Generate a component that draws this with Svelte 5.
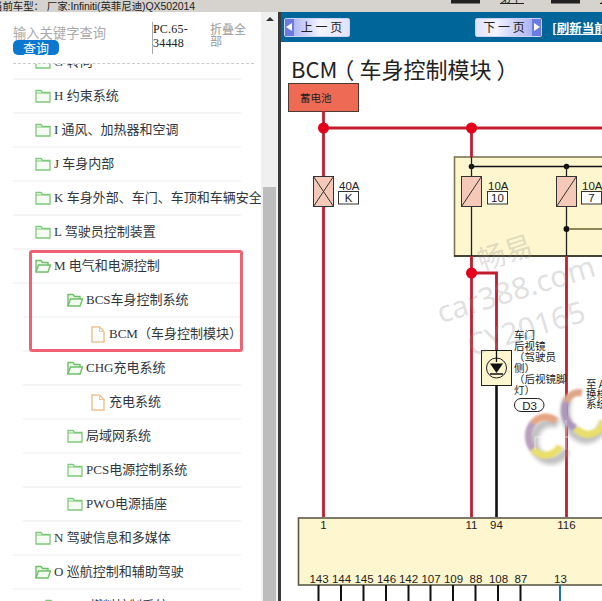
<script>
	const rows = [
		{ label: 'G 转向', level: 1, icon: 'closed' },
		{ label: 'H 约束系统', level: 1, icon: 'closed' },
		{ label: 'I 通风、加热器和空调', level: 1, icon: 'closed' },
		{ label: 'J 车身内部', level: 1, icon: 'closed' },
		{ label: 'K 车身外部、车门、车顶和车辆安全系统', level: 1, icon: 'closed' },
		{ label: 'L 驾驶员控制装置', level: 1, icon: 'closed' },
		{ label: 'M 电气和电源控制', level: 1, icon: 'open' },
		{ label: 'BCS车身控制系统', level: 2, icon: 'open' },
		{ label: 'BCM（车身控制模块）', level: 3, icon: 'doc' },
		{ label: 'CHG充电系统', level: 2, icon: 'open' },
		{ label: '充电系统', level: 3, icon: 'doc' },
		{ label: '局域网系统', level: 2, icon: 'closed' },
		{ label: 'PCS电源控制系统', level: 2, icon: 'closed' },
		{ label: 'PWO电源插座', level: 2, icon: 'closed' },
		{ label: 'N 驾驶信息和多媒体', level: 1, icon: 'closed' },
		{ label: 'O 巡航控制和辅助驾驶', level: 1, icon: 'open' },
		{ label: '燃料控制系统', level: 4, icon: 'closed' }
	];

	const topPins = [
		{ n: '1', x: 323.5 },
		{ n: '11', x: 471.5 },
		{ n: '94', x: 496.5 },
		{ n: '116', x: 566.5 }
	];

	const bottomPins = [
		{ n: '143', x: 319, w: 318.5 },
		{ n: '144', x: 341.5, w: 341 },
		{ n: '145', x: 364, w: 363.5 },
		{ n: '146', x: 386.5, w: 386 },
		{ n: '142', x: 408.5, w: 408.5 },
		{ n: '107', x: 431, w: 430.5 },
		{ n: '109', x: 453.5, w: 453 },
		{ n: '88', x: 476, w: 475.5 },
		{ n: '108', x: 498.5, w: 498 },
		{ n: '87', x: 521, w: 520.5 }
	];

	const mirrorLines = ['车门', '后视镜', '（驾驶员', '侧）', '（后视镜脚', '灯）'];
</script>

<div class="page">
	<div class="topbar">
		<span class="car">当前车型： 厂家:Infiniti(英菲尼迪)QX502014</span>
		<span class="tab-btn"></span>
		<span class="tab-link">第十</span>
		<span class="tab-btn"></span>
		<span class="tab-link last">第十</span>
	</div>

	<div class="main">
		<aside class="side">
			<div class="search">
				<div class="query">
					<div class="placeholder">输入关键字查询</div>
					<div class="query-btn">查询</div>
				</div>
				<div class="code">PC.65-<br />34448</div>
				<div class="fold">折叠全部</div>
			</div>

			<div class="tree">
				{#each rows as row}
					<div class="row lv{row.level}">
						{#if row.icon === 'closed'}
							<svg class="icon" width="16" height="14" viewBox="0 0 16 14">
								<path d="M1 13V1.5h5l1.5 2H15V13z" fill="#f6fcf4" stroke="#7fc97a" stroke-width="1.3" />
								<path d="M1 4h14" stroke="#7fc97a" stroke-width="1" />
							</svg>
						{:else if row.icon === 'open'}
							<svg class="icon" width="16" height="14" viewBox="0 0 16 14">
								<path d="M1 13V1.5h5l1.5 2H13V6" fill="#eaf7e6" stroke="#6fc069" stroke-width="1.4" />
								<path d="M1 13l2.5-7H15.5L13 13z" fill="#f6fcf4" stroke="#6fc069" stroke-width="1.4" />
							</svg>
						{:else}
							<svg class="icon doc" width="14" height="17" viewBox="0 0 14 17">
								<path d="M1 1h7.5L13 5.5V16H1z" fill="#fff" stroke="#efc594" stroke-width="1.5" />
								<path d="M8.5 1v4.5H13" fill="none" stroke="#efc594" stroke-width="1" />
							</svg>
						{/if}
						<span class="label">{row.label}</span>
					</div>
				{/each}
			</div>

			<div class="highlight"></div>
		</aside>

		<div class="scrollbar">
			<div class="arrow"></div>
			<div class="thumb"></div>
		</div>

		<section class="content">
			<div class="nav">
				<div class="page-btn">
					<span class="btn-arrow left"></span>
					<span class="btn-text">上 一 页</span>
				</div>
				<div class="page-btn next">
					<span class="btn-text">下 一 页</span>
					<span class="btn-arrow right"></span>
				</div>
				<span class="refresh">[刷新当前页]</span>
			</div>

			<svg class="diagram" viewBox="281 42 321 559" width="321" height="559">
				<defs>
					<filter id="soft"><feGaussianBlur stdDeviation="2" /></filter>
					<filter id="softer"><feGaussianBlur stdDeviation="1" /></filter>
				</defs>

				<!-- parens nudged to the middle of their cell -->
				<text x="291" y="78" class="title">BCM<tspan dx="-5">（</tspan><tspan dx="5">车身控制模块</tspan><tspan dx="5">）</tspan></text>

				<rect x="288.5" y="83.5" width="70" height="28" fill="#ee6a55" stroke="#4d3a32" />
				<text x="300" y="102" class="small" fill="#4a1410">蓄电池</text>

				<!-- yellow fuse block -->
				<rect x="454.5" y="157" width="160" height="99" fill="#fdf6cf" stroke="#7d7654" stroke-width="1.6" />
				<path d="M454 256H602" stroke="#2c2a20" stroke-width="1.5" />
				<path d="M471.5 166.5H602" stroke="#111" stroke-width="1.3" />
				<circle cx="471.5" cy="166.5" r="2.8" fill="#111" />
				<circle cx="566.5" cy="166.5" r="2.8" fill="#111" />
				<path d="M471.5 157V176M566.5 166V176M471.5 207V256M566.5 207V256" stroke="#222" stroke-width="1.3" />
				<circle cx="566.5" cy="229" r="3" fill="#111" />
				<path d="M569 229H602" stroke="#8c8558" stroke-width="2" />

				<!-- red supply lines -->
				<g fill="none" stroke="#c11f30" stroke-width="2.8">
					<path d="M323.5 111V176M323.5 207V517" />
					<path d="M323 128H602" />
					<path d="M471.5 128V157M471.5 256V517" />
					<path d="M471.5 273H496.5V350" />
					<path d="M566.5 256V517" />
				</g>
				<circle cx="323.5" cy="128" r="5.5" fill="#e2001a" />
				<circle cx="471.5" cy="128" r="5.5" fill="#e2001a" />
				<circle cx="471.5" cy="273" r="5.5" fill="#e2001a" />

				<!-- fuses -->
				<g stroke="#333" stroke-width="1" fill="#f5c9b8">
					<rect x="313.5" y="176.5" width="20" height="30" />
					<path d="M313.5 176.5L333.5 206.5M333.5 176.5L313.5 206.5" fill="none" />
					<rect x="461.5" y="176.5" width="20" height="30" />
					<path d="M461.5 206.5L481.5 176.5" fill="none" />
					<rect x="556.5" y="176.5" width="20" height="30" />
					<path d="M556.5 206.5L576.5 176.5" fill="none" />
				</g>
				<g class="fuse-label">
					<text x="339" y="190">40A</text>
					<text x="488" y="190">10A</text>
					<text x="582" y="190">10A</text>
				</g>
				<g fill="#fff" stroke="#333">
					<rect x="338.5" y="191.5" width="20" height="12.5" />
					<rect x="487.5" y="191.5" width="20" height="12.5" />
					<rect x="581.5" y="191.5" width="20" height="12.5" />
				</g>
				<g class="fuse-label" text-anchor="middle">
					<text x="348.5" y="202">K</text>
					<text x="497.5" y="202">10</text>
					<text x="591.5" y="202">7</text>
				</g>

				<!-- door mirror lamp -->
				<rect x="481.5" y="350.5" width="30" height="35" fill="#fdf6cf" stroke="#222" />
				<circle cx="496.5" cy="368" r="10" fill="none" stroke="#222" stroke-width="1" />
				<path d="M490 363.5H503L496.5 373z" fill="#111" />
				<path d="M490 374H503M496.5 350V362" stroke="#111" stroke-width="1.3" />
				<path d="M496.5 385V517" stroke="#111" stroke-width="2.6" />

				<!-- watermark -->
				<g class="mark" text-anchor="middle">
					<text x="505" y="263" font-size="28" transform="rotate(-18 505 253)">畅易</text>
					<text x="516" y="300" font-size="30" transform="rotate(-17 516 290)">car388.com</text>
					<text x="526" y="339" font-size="30" transform="rotate(-17 526 328)">CY20165</text>
				</g>

				{#each mirrorLines as line, i}
					<text x="514" y={339 + i * 11} class="small">{line}</text>
				{/each}
				<rect x="514.5" y="398.5" width="29.5" height="13" rx="6.5" fill="#fff" stroke="#222" />
				<text x="529.5" y="409.5" class="pin">D3</text>
				<text x="586" y="388" class="small">至 A</text>
				<text x="586" y="398" class="small">换档</text>
				<text x="586" y="408" class="small">系统</text>

				<!-- connector -->
				<rect x="298.5" y="518" width="320" height="67" fill="#fdf6cf" stroke="#5b5a47" stroke-width="1.6" />
				{#each topPins as pin}
					<text x={pin.x} y="528.5" class="pin">{pin.n}</text>
				{/each}
				{#each bottomPins as pin}
					<text x={pin.x} y="583" class="pin">{pin.n}</text>
					<path d="M{pin.w} 585V601" stroke="#111" stroke-width="2" />
				{/each}
				<text x="560.5" y="583" class="pin">13</text>
				<path d="M560 585V601" stroke="#1b75ae" stroke-width="2" />

				<!-- logo rings -->
				<g filter="url(#soft)" fill="none" stroke="#8f8f8f" stroke-width="9" opacity="0.55">
					<path d="M558 424A17 19 0 1 0 566 450" />
					<path d="M568 398A13 18 0 1 0 604 424" />
				</g>
				<g filter="url(#softer)" fill="none" stroke-width="7">
					<path d="M556 421A17 19 0 0 0 533 423" stroke="#e6a582" />
					<path d="M533 423A17 19 0 0 0 533 449" stroke="#b9a0bc" />
					<path d="M533 449A17 19 0 0 0 560 446" stroke="#e9df6c" />
					<path d="M582 393A14 15 0 0 0 566 402" stroke="#dea78a" />
					<path d="M566 402A14 18 0 0 0 576 428" stroke="#ad98bb" />
					<path d="M576 428A14 12 0 0 0 602 420" stroke="#e9df6c" />
				</g>
				<path d="M535 437H570M535 437V450M566 420V450" stroke="#fff" stroke-opacity="0.6" stroke-width="1" fill="none" />
			</svg>
		</section>
	</div>
</div>

<style>
	:global(body) {
		margin: 0;
		background: #fff;
	}

	.page {
		width: 602px;
		height: 601px;
		overflow: hidden;
		display: flex;
		flex-direction: column;
	}

	.topbar {
		flex: none;
		height: 12px;
		background: #d6d3ce;
		display: flex;
		align-items: flex-start;
		overflow: hidden;
	}

	.car {
		width: 459px;
		margin-left: -8px;
		margin-top: 1px;
		font: 10.5px/11px 'Liberation Sans', 'Noto Sans CJK SC', sans-serif;
		letter-spacing: -0.1px;
		color: #222;
		white-space: nowrap;
		flex: none;
	}

	.tab-btn {
		flex: none;
		width: 29px;
		height: 4px;
		background: #222;
		border-bottom: 1px solid #777;
		box-sizing: border-box;
	}

	.tab-link {
		flex: none;
		width: 24px;
		margin: -8px 27px 0 20px;
		font: 11px/11px 'Noto Sans CJK SC', sans-serif;
		height: 11px;
		color: #222;
		border-bottom: 1px solid #222;
		white-space: nowrap;
	}

	.main {
		flex: 1;
		display: flex;
		min-height: 0;
	}

	.side {
		flex: none;
		width: 261px;
		position: relative;
		overflow: hidden;
		display: flex;
		flex-direction: column;
		background: #fff;
	}

	.search {
		flex: none;
		height: 52px;
		box-sizing: border-box;
		margin-left: 13px;
		width: 241px;
		border-bottom: 1px dashed #ccc;
		display: flex;
		align-items: flex-start;
		padding-top: 10px;
	}

	.query {
		width: 139px;
		flex: none;
		padding-top: 4px;
	}

	.placeholder {
		font: 13.3px/13px 'Noto Sans CJK SC', sans-serif;
		color: #aaa;
	}

	.query-btn {
		width: 46px;
		height: 15px;
		margin-top: 1px;
		background: #0b78d0;
		border-radius: 5px;
		color: #fff;
		text-align: center;
		font: 13px/15px 'Noto Sans CJK SC', sans-serif;
	}

	.code {
		flex: none;
		width: 57px;
		height: 32px;
		border-left: 1px solid #aaa;
		font: 12px/14px 'Liberation Serif', serif;
		color: #222;
		letter-spacing: 0.2px;
	}

	.fold {
		flex: none;
		width: 37px;
		margin-top: 1px;
		font: 12px/12px 'Noto Sans CJK SC', sans-serif;
		color: #999;
	}

	.tree {
		flex: 1;
		min-height: 0;
		margin-top: -18px;
		position: relative;
		z-index: 0;
		clip-path: inset(18px -30px 0 0);
		width: 241px;
	}

	.row {
		height: 34px;
		box-sizing: border-box;
		border-bottom: 2px solid #f5f5f5;
		display: flex;
		align-items: center;
		white-space: nowrap;
		font: 13px/16px 'Liberation Serif', 'Noto Sans CJK SC', serif;
		color: #2f3640;
	}

	.lv1 {
		margin-left: 13px;
		padding-left: 22px;
	}

	.lv2 {
		margin-left: 23px;
		padding-left: 44px;
	}

	.lv3 {
		margin-left: 23px;
		padding-left: 68px;
	}

	.lv4 {
		margin-left: 13px;
		padding-left: 32px;
	}

	.lv4 .label {
		margin-left: 26px;
	}

	.icon {
		flex: none;
		margin-right: 3px;
	}

	.icon.doc {
		margin-right: 4px;
	}

	.highlight {
		position: absolute;
		left: 29px;
		top: 238px;
		width: 214px;
		height: 102px;
		box-sizing: border-box;
		border: 3px solid #ee6274;
		border-radius: 3px;
	}

	.scrollbar {
		flex: none;
		width: 17px;
		background: #f0f0f0;
		position: relative;
	}

	.arrow {
		position: absolute;
		left: 5px;
		top: 5px;
		border-left: 4px solid transparent;
		border-right: 4px solid transparent;
		border-bottom: 4px solid #333;
	}

	.thumb {
		position: absolute;
		left: 2px;
		top: 175px;
		width: 13px;
		bottom: 0;
		background: #bdbdbd;
	}

	.content {
		flex: 1;
		min-width: 0;
		display: flex;
		flex-direction: column;
		border-left: 3px solid #3a3a3a;
		background: #fff;
		overflow: hidden;
	}

	.nav {
		flex: none;
		height: 30px;
		background: #006699;
		display: flex;
		align-items: center;
		padding-left: 3px;
		white-space: nowrap;
	}

	.page-btn {
		flex: none;
		width: 66px;
		height: 19px;
		box-sizing: border-box;
		border: 1px solid #c9d2f5;
		border-radius: 2px;
		background: linear-gradient(90deg, #9aa4ee, #f4f5ff 55%, #dfe2fb);
		display: flex;
		align-items: center;
		color: #222;
		font: 12px/16px 'Noto Sans CJK SC', sans-serif;
	}

	.page-btn.next {
		width: 67px;
		margin-left: 125px;
		background: linear-gradient(90deg, #dfe2fb, #f4f5ff 30%, #9aa4ee);
		justify-content: flex-end;
	}

	.btn-text {
		flex: 1;
		text-align: center;
	}

	.btn-arrow {
		flex: none;
		width: 9px;
		height: 17px;
		background: #6c7be2;
		position: relative;
	}

	.btn-arrow::after {
		content: '';
		position: absolute;
		top: 4px;
		border-top: 4px solid transparent;
		border-bottom: 4px solid transparent;
	}

	.btn-arrow.left::after {
		left: 1px;
		border-right: 6px solid #fff;
	}

	.btn-arrow.right::after {
		left: 2px;
		border-left: 6px solid #fff;
	}

	.refresh {
		margin-left: 10px;
		margin-top: 2px;
		color: #fff;
		font: bold 12.5px/16px 'Noto Sans CJK SC', sans-serif;
		text-decoration: underline;
	}

	.diagram {
		flex: none;
		display: block;
	}

	.title {
		font: 22px 'Noto Sans CJK SC', sans-serif;
		fill: #222;
	}

	.small {
		font: 10.5px 'Noto Sans CJK SC', 'Liberation Sans', sans-serif;
		fill: #222;
	}

	.fuse-label {
		font: 11.5px 'Liberation Sans', sans-serif;
		fill: #222;
	}

	.pin {
		font: 11.5px 'Liberation Sans', sans-serif;
		fill: #222;
		text-anchor: middle;
	}

	.mark {
		font-family: 'Noto Sans', 'Noto Sans CJK SC', sans-serif;
		fill: #8a8a8a;
		fill-opacity: 0.27;
	}
</style>
